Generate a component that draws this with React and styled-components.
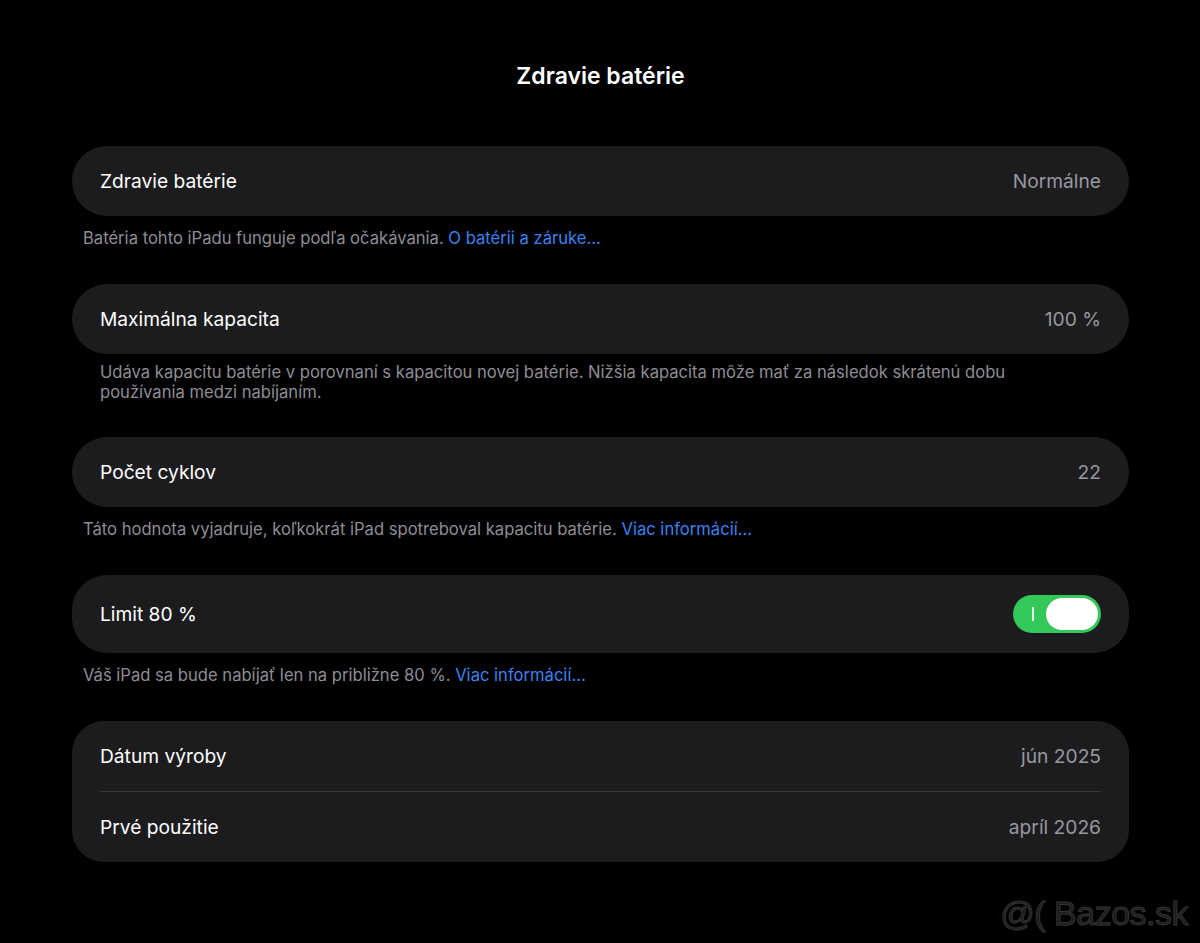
import React from 'react';
import styled, { createGlobalStyle } from 'styled-components';

const GlobalStyle = createGlobalStyle`
  html, body {
    margin: 0;
    padding: 0;
    background: #000;
  }
  body {
    font-family: Inter, "Noto Sans", "Liberation Sans", sans-serif;
    -webkit-font-smoothing: antialiased;
  }
`;

const sections = [
  {
    rows: [{ label: 'Zdravie batérie', value: 'Normálne' }],
    note: 'Batéria tohto iPadu funguje podľa očakávania.',
    link: 'O batérii a záruke…',
  },
  {
    rows: [{ label: 'Maximálna kapacita', value: '100 %' }],
    note: 'Udáva kapacitu batérie v porovnaní s kapacitou novej batérie. Nižšia kapacita môže mať za následok skrátenú dobu používania medzi nabíjaním.',
    indent: true,
  },
  {
    rows: [{ label: 'Počet cyklov', value: '22' }],
    note: 'Táto hodnota vyjadruje, koľkokrát iPad spotreboval kapacitu batérie.',
    link: 'Viac informácií…',
  },
  {
    rows: [{ label: 'Limit 80 %', toggle: true }],
    note: 'Váš iPad sa bude nabíjať len na približne 80 %.',
    link: 'Viac informácií…',
  },
  {
    rows: [
      { label: 'Dátum výroby', value: 'jún 2025' },
      { label: 'Prvé použitie', value: 'apríl 2026' },
    ],
  },
];

const App = () => {
  return (
    <Page>
      <GlobalStyle />
      <Title>Zdravie batérie</Title>
      <List>
        {sections.map((s, i) => (
          <Section key={i}>
            <Card $grouped={s.rows.length > 1}>
              {s.rows.map((r, j) => (
                <Row key={j} $tall={r.toggle} $divided={j > 0}>
                  <Label>{r.label}</Label>
                  {r.toggle ? (
                    <Switch>
                      <OnMark />
                      <Knob />
                    </Switch>
                  ) : (
                    <Value>{r.value}</Value>
                  )}
                </Row>
              ))}
            </Card>
            {s.note && (
              <Note $indent={s.indent}>
                {s.note}
                {s.link && <Link> {s.link}</Link>}
              </Note>
            )}
          </Section>
        ))}
      </List>
      <Watermark>@( Bazos.sk</Watermark>
    </Page>
  );
};

export default App;

const Page = styled.div`
  position: relative;
  width: 1200px;
  height: 943px;
  background: #000;
  overflow: hidden;
  box-sizing: border-box;
  padding: 62px 71px 0 72px;
`;

const Title = styled.h1`
  margin: 0;
  text-align: center;
  color: #fff;
  font-size: 23px;
  font-weight: 600;
  line-height: 28px;
`;

const List = styled.div`
  display: flex;
  flex-direction: column;
  gap: 35px;
  margin-top: 56px;
`;

const Section = styled.section`
  display: flex;
  flex-direction: column;
`;

const Card = styled.div`
  background: #1c1c1e;
  border-radius: ${(p) => (p.$grouped ? '32px' : '35px')};
  padding: 0 28px;
`;

const Row = styled.div`
  display: flex;
  align-items: center;
  justify-content: space-between;
  height: ${(p) => (p.$tall ? '78px' : '70px')};
  border-top: ${(p) => (p.$divided ? '1px solid #38383a' : 'none')};
`;

const Label = styled.span`
  color: #fff;
  font-size: 19.2px;
`;

const Value = styled.span`
  color: #98989e;
  font-size: 19.2px;
`;

const Note = styled.p`
  margin: 0;
  padding: ${(p) => (p.$indent ? '8px 60px 0 28px' : '12px 11px 0')};
  color: #8d8d93;
  font-size: 16.6px;
  line-height: ${(p) => (p.$indent ? '20px' : '21px')};
`;

const Link = styled.span`
  color: #3b82f0;
`;

const Switch = styled.div`
  position: relative;
  width: 88px;
  height: 38px;
  border-radius: 19px;
  background: #34c759;
`;

const OnMark = styled.span`
  position: absolute;
  left: 19px;
  top: 12px;
  width: 1.5px;
  height: 14px;
  background: rgba(255, 255, 255, 0.85);
`;

const Knob = styled.span`
  position: absolute;
  right: 3px;
  top: 3px;
  width: 52px;
  height: 32px;
  border-radius: 16px;
  background: #fff;
`;

const Watermark = styled.div`
  position: absolute;
  right: 12px;
  bottom: 10px;
  font-family: "Liberation Sans", Arial, sans-serif;
  font-size: 34px;
  color: #1c1c1c;
  -webkit-text-stroke: 1px #343434;
  letter-spacing: -0.5px;
`;
